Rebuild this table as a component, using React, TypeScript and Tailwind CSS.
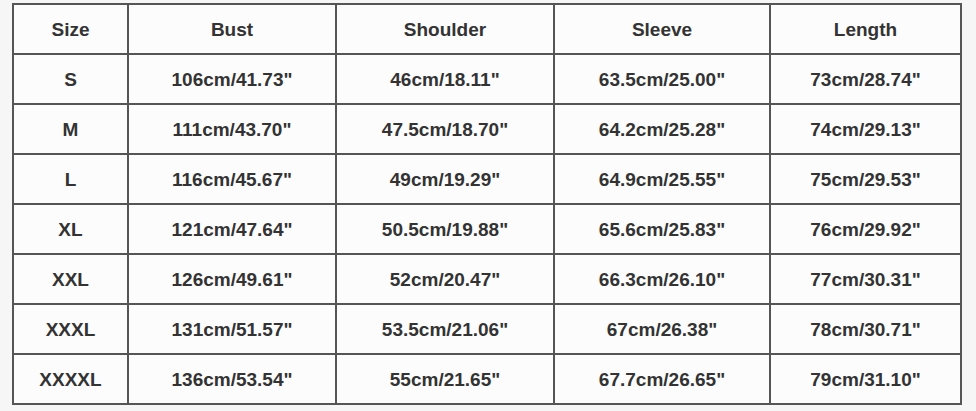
import React from "react";

const headers = ["Size", "Bust", "Shoulder", "Sleeve", "Length"];

const rows = [
  ["S", "106cm/41.73\"", "46cm/18.11\"", "63.5cm/25.00\"", "73cm/28.74\""],
  ["M", "111cm/43.70\"", "47.5cm/18.70\"", "64.2cm/25.28\"", "74cm/29.13\""],
  ["L", "116cm/45.67\"", "49cm/19.29\"", "64.9cm/25.55\"", "75cm/29.53\""],
  ["XL", "121cm/47.64\"", "50.5cm/19.88\"", "65.6cm/25.83\"", "76cm/29.92\""],
  ["XXL", "126cm/49.61\"", "52cm/20.47\"", "66.3cm/26.10\"", "77cm/30.31\""],
  ["XXXL", "131cm/51.57\"", "53.5cm/21.06\"", "67cm/26.38\"", "78cm/30.71\""],
  ["XXXXL", "136cm/53.54\"", "55cm/21.65\"", "67.7cm/26.65\"", "79cm/31.10\""],
];

const App = () => {
  return (
    <div className="w-[976px] h-[411px] bg-[#f6f6f6] pt-[3px] pl-[12px]">
      <div
        className="grid grid-cols-[113px_206px_216px_214px_189px] auto-rows-[48px] gap-[2px] p-[2px] bg-[#555555] w-fit text-[19px] font-bold text-[#333333]"
        style={{ fontFamily: '"Liberation Sans", Arial, sans-serif' }}
      >
        {[headers, ...rows].map((row, i) =>
          row.map((cell, j) => (
            <div
              key={`${i}-${j}`}
              className="bg-[#fcfcfc] flex items-center justify-center pt-[3px]"
            >
              {cell}
            </div>
          ))
        )}
      </div>
    </div>
  );
};

export default App;
